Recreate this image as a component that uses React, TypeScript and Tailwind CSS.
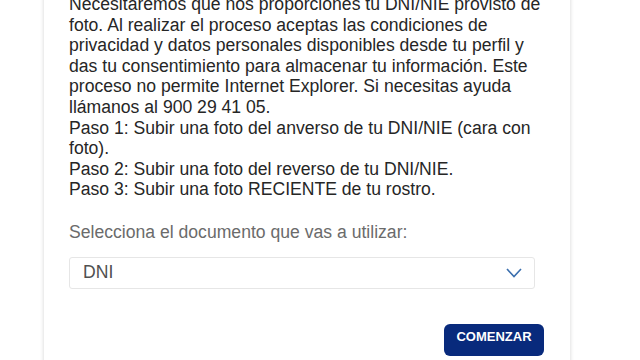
export default function App() {
    return (
        <div className="w-[640px] h-[360px] overflow-hidden bg-white font-['Liberation_Sans',Arial,sans-serif]">
            <div className="ml-[44px] w-[526px] h-[380px] -mt-[6px] bg-white shadow-[0_0_4px_rgba(0,0,0,0.18)] pl-[25px] pr-[26px]">
                <p className="text-[17.6px] leading-[20.6px] text-[#262626]">
                    Necesitaremos que nos proporciones tu DNI/NIE provisto de foto. Al realizar el proceso aceptas las
                    condiciones de privacidad y datos personales disponibles desde tu perfil y das tu consentimiento
                    para almacenar tu información. Este proceso no permite Internet Explorer. Si necesitas ayuda
                    llámanos al 900 29 41 05.
                    <br />
                    Paso 1: Subir una foto del anverso de tu DNI/NIE (cara con foto).
                    <br />
                    Paso 2: Subir una foto del reverso de tu DNI/NIE.
                    <br />
                    Paso 3: Subir una foto RECIENTE de tu rostro.
                </p>
                <p className="mt-[22px] text-[17.6px] leading-[20.6px] text-[#6b6b6b]">
                    Selecciona el documento que vas a utilizar:
                </p>
                <div className="mt-[14px] mr-[9px] h-[32px] flex items-center justify-between border border-[#e6e6e6] rounded-[3px] pl-[13px] pr-[12px]">
                    <span className="text-[17.6px] text-[#505050]">DNI</span>
                    <svg width="16" height="10" viewBox="0 0 16 10" fill="none">
                        <path d="M1 1 L8 8.5 L15 1" stroke="#3b6fae" strokeWidth="1.6" />
                    </svg>
                </div>
                <div className="mt-[35px] flex justify-end">
                    <button className="w-[100px] h-[32px] rounded-[6px] bg-[#082a7c] text-white text-[13px] font-bold pb-[6px]">
                        COMENZAR
                    </button>
                </div>
            </div>
        </div>
    );
}
